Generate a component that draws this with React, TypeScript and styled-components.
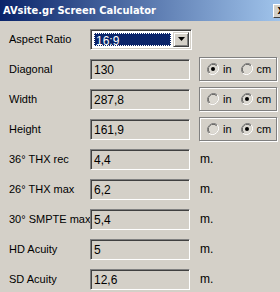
import React from 'react';
import styled, { createGlobalStyle } from 'styled-components';

const GlobalStyle = createGlobalStyle`
  html, body {
    margin: 0;
    padding: 0;
    background: #d4d0c8;
    overflow: hidden;
  }
`;

interface Row {
  label: string;
  value: string;
  unit?: 'radio' | 'm';
  metric?: boolean;
}

const rows: Row[] = [
  { label: 'Diagonal', value: '130', unit: 'radio', metric: false },
  { label: 'Width', value: '287,8', unit: 'radio', metric: true },
  { label: 'Height', value: '161,9', unit: 'radio', metric: true },
  { label: '36° THX rec', value: '4,4', unit: 'm' },
  { label: '26° THX max', value: '6,2', unit: 'm' },
  { label: '30° SMPTE max', value: '5,4', unit: 'm' },
  { label: 'HD Acuity', value: '5', unit: 'm' },
  { label: 'SD Acuity', value: '12,6', unit: 'm' },
];

// Classic sunken radio button
const Radio: React.FC<{ checked: boolean }> = ({ checked }) => (
  <svg width="12" height="12" viewBox="0 0 12 12">
    <path d="M10.2 1.8 A6 6 0 0 0 1.8 10.2" stroke="#808080" strokeWidth="1" fill="none" />
    <path d="M9.5 2.5 A5 5 0 0 0 2.5 9.5" stroke="#404040" strokeWidth="1" fill="none" />
    <path d="M10.2 1.8 A6 6 0 0 1 1.8 10.2" stroke="#ffffff" strokeWidth="1" fill="none" />
    <circle cx="6" cy="6" r="4.3" fill="#dcd9d2" />
    {checked && <circle cx="6" cy="6" r="2" fill="#000" />}
  </svg>
);

const App: React.FC = () => {
  return (
    <Window>
      <GlobalStyle />
      <TitleBar>
        <Title>AVsite.gr Screen Calculator</Title>
        <CloseButton>X</CloseButton>
      </TitleBar>
      <Form>
        <Label>Aspect Ratio</Label>
        <Select>
          <Selected>16:9</Selected>
          <DropButton>
            <svg width="7" height="4" viewBox="0 0 7 4">
              <path d="M0 0 H7 L3.5 4 Z" fill="#000" />
            </svg>
          </DropButton>
        </Select>
        <span />
        {rows.map((r) => (
          <React.Fragment key={r.label}>
            <Label>{r.label}</Label>
            <Field>{r.value}</Field>
            {r.unit === 'radio' ? (
              <RadioGroup>
                <RadioItem>
                  <Radio checked={!r.metric} />
                  in
                </RadioItem>
                <RadioItem>
                  <Radio checked={!!r.metric} />
                  cm
                </RadioItem>
              </RadioGroup>
            ) : (
              <Unit>m.</Unit>
            )}
          </React.Fragment>
        ))}
      </Form>
    </Window>
  );
};

const Window = styled.div`
  width: 291px;
  height: 292px;
  background: #d4d0c8;
  font-family: 'Liberation Sans', Arial, sans-serif;
  font-size: 11px;
  color: #000;
`;

const TitleBar = styled.div`
  height: 21px;
  display: flex;
  align-items: center;
  padding: 0 2px 0 3px;
  background: linear-gradient(to right, #0a246a, #a6caf0);
`;

const Title = styled.div`
  flex: 1;
  color: #fff;
  font-family: 'DejaVu Sans Condensed', 'DejaVu Sans', Verdana, sans-serif;
  font-weight: bold;
  font-size: 11px;
`;

const CloseButton = styled.div`
  width: 16px;
  height: 14px;
  box-sizing: border-box;
  background: #d4d0c8;
  border-top: 1px solid #fff;
  border-left: 1px solid #fff;
  border-right: 1px solid #404040;
  border-bottom: 1px solid #404040;
  font-family: 'DejaVu Sans', sans-serif;
  font-weight: bold;
  font-size: 9px;
  line-height: 12px;
  text-align: center;
`;

const Form = styled.div`
  display: grid;
  grid-template-columns: 81px 100px 88px;
  grid-auto-rows: 30px;
  padding: 3px 0 0 9px;
  align-items: center;
`;

const Label = styled.div`
  white-space: nowrap;
`;

const sunken = `
  box-sizing: border-box;
  border-top: 1px solid #808080;
  border-left: 1px solid #808080;
  border-right: 1px solid #fff;
  border-bottom: 1px solid #fff;
  box-shadow: inset 1px 1px #404040, inset -1px -1px #d4d0c8;
`;

const Field = styled.div`
  ${sunken}
  width: 100px;
  height: 21px;
  padding: 3px 0 0 3px;
  font-size: 12px;
  background: #d4d0c8;
`;

const Select = styled.div`
  ${sunken}
  width: 102px;
  height: 21px;
  background: #fff;
  display: flex;
  padding: 2px;
  gap: 1px;
  font-size: 12px;
`;

const Selected = styled.div`
  flex: 1;
  background: #0a246a;
  color: #fff;
  outline: 1px dotted #fff;
  outline-offset: -1px;
  padding: 1px 0 0 2px;
  margin: 1px;
`;

const DropButton = styled.div`
  width: 16px;
  box-sizing: border-box;
  background: #d4d0c8;
  border-top: 1px solid #d4d0c8;
  border-left: 1px solid #d4d0c8;
  border-right: 1px solid #404040;
  border-bottom: 1px solid #404040;
  box-shadow: inset 1px 1px #fff, inset -1px -1px #808080;
  display: flex;
  align-items: center;
  justify-content: center;
`;

const RadioGroup = styled.div`
  margin-left: 9px;
  width: 78px;
  height: 24px;
  box-sizing: border-box;
  border: 1px solid #808080;
  box-shadow: inset 1px 1px #fff, 1px 1px #fff;
  display: flex;
  align-items: center;
  padding-left: 7px;
  gap: 9px;
  font-size: 11px;
`;

const RadioItem = styled.div`
  display: flex;
  align-items: center;
  gap: 4px;
`;

const Unit = styled.div`
  margin-left: 10px;
  font-size: 12px;
`;

export default App;
